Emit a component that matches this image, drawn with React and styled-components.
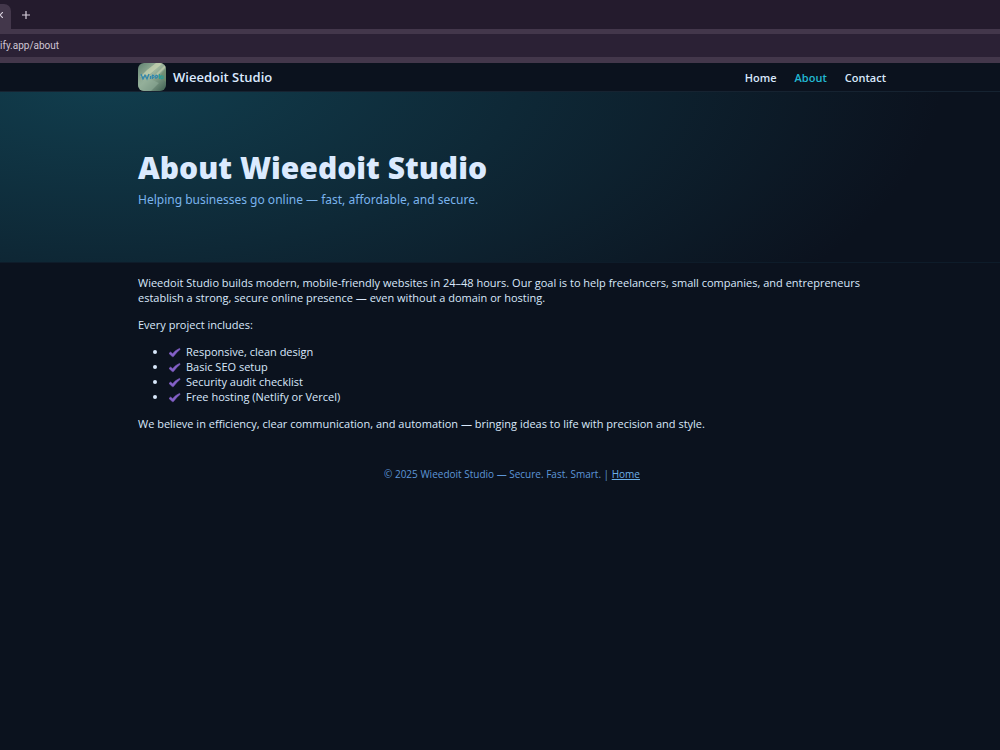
import React from "react"
import styled, { createGlobalStyle, ThemeProvider } from "styled-components"

const theme = {
    font: '"Open Sans", "Noto Sans", sans-serif',
    display: '"Noto Sans", "Open Sans", sans-serif',
    background: "#0b121e",
    text: "#d9e8fb",
    heading: "#dbeafe",
    soft: "#7ab4ee",
    accent: "#22b8d3",
    line: "#162331",
    check: "#8561c9",
}

const GlobalStyle = createGlobalStyle`
    * {
        box-sizing: border-box;
    }

    body {
        margin: 0;
        overflow-x: hidden;
        background-color: ${theme.background};
        color: ${theme.text};
        font-family: ${theme.font};
        font-size: 11px;
        line-height: 15px;
    }
`

/* the window runs a little past the right edge of the screen */
const Window = styled.div`
    width: calc(100% + 24px);
`

const TabStrip = styled.div`
    display: flex;
    align-items: flex-end;
    height: 29px;
    background-color: #241b2d;
`

const Tab = styled.div`
    display: flex;
    align-items: flex-start;
    width: 11px;
    height: 25px;
    background-color: #43374b;
    border-top-right-radius: 7px;
`

const IconButton = styled.button`
    display: flex;
    align-items: center;
    justify-content: ${({ $align }) => $align || "center"};
    width: ${({ $width }) => $width};
    height: ${({ $height }) => $height};
    padding: 0;
    border: none;
    background: none;
    color: #d8d0dd;

    svg {
        flex: none;
    }
`

const Toolbar = styled.div`
    display: flex;
    align-items: center;
    height: 34px;
    border-top: 5px solid #43374b;
    border-bottom: 6px solid #43374b;
    background-color: #2b2135;
`

const AddressInput = styled.input`
    width: 100%;
    height: 23px;
    padding: 0;
    border: none;
    outline: none;
    background: none;
    color: #cfc6d4;
    font-family: Roboto, sans-serif;
    font-size: 10px;
`

const Container = styled.div`
    width: 748px;
    max-width: 100%;
    margin: 0 auto;
`

const Header = styled.header`
    border-bottom: 1px solid ${({ theme }) => theme.line};
`

const HeaderRow = styled(Container)`
    display: flex;
    align-items: center;
    justify-content: space-between;
    height: 28px;
`

const Brand = styled.a`
    display: flex;
    align-items: center;
    gap: 7px;
    color: ${({ theme }) => theme.heading};
    font-size: 13px;
    font-weight: 600;
    text-decoration: none;
`

const Nav = styled.nav`
    display: flex;
    gap: 18px;
`

const NavLink = styled.a`
    color: ${({ $active, theme }) => ($active ? theme.accent : theme.text)};
    font-size: 11px;
    font-weight: 600;
    text-decoration: none;
`

const Hero = styled.section`
    padding: 56px 0 53px;
    border-bottom: 1px solid #0e1c2a;
    background: radial-gradient(840px 360px at 10% -10%, #113e4e, transparent);
`

const Title = styled.h1`
    margin: 0;
    color: ${({ theme }) => theme.heading};
    font-size: 30px;
    font-weight: 800;
    line-height: 40px;
`

const Subtitle = styled.p`
    margin: 2px 0 0;
    color: ${({ theme }) => theme.soft};
    font-family: ${({ theme }) => theme.display};
    font-size: 12px;
    line-height: 19px;
`

const Content = styled(Container)`
    padding: 12px 0 0;

    p {
        margin: 0 0 12px;
    }
`

const FeatureList = styled.ul`
    margin: 0 0 12px;
    padding-left: 30px;
`

const Feature = styled.li`
    svg {
        margin-right: 5px;
        vertical-align: middle;
    }

    &::marker {
        font-size: 12px;
    }
`

const Footer = styled.footer`
    padding: 24px 0;
    color: #5d96d8;
    font-size: 10px;
    text-align: center;

    a {
        color: #6eb0e6;
    }
`

const features = [
    "Responsive, clean design",
    "Basic SEO setup",
    "Security audit checklist",
    "Free hosting (Netlify or Vercel)",
]

const Logo = () => (
    <svg width="28" height="28" viewBox="0 0 28 28" aria-hidden="true">
        <defs>
            <linearGradient id="sky" x1="0" y1="0" x2="1" y2="1">
                <stop offset="0" stopColor="#5f8070" />
                <stop offset="0.45" stopColor="#9db59d" />
                <stop offset="1" stopColor="#3c5e50" />
            </linearGradient>
            <clipPath id="round">
                <rect width="28" height="28" rx="6" />
            </clipPath>
        </defs>
        <g clipPath="url(#round)">
            <rect width="28" height="28" fill="url(#sky)" />
            <path d="M18 0h7L12 11 2 14l7-7z" fill="#d3dcb9" opacity="0.6" />
            <path d="M28 1v3L18 14h-3z" fill="#d3dcb9" opacity="0.5" />
            <path d="M28 5v14l-7-5z" fill="#6d8a6c" opacity="0.7" />
            <path d="M0 19l12-3 9 4-8 8H0z" fill="#8dac98" opacity="0.6" />
            <path
                d="M3 11l2 5 2-4 2 4 2-5M12.500 13v3M14.500 15q3-1 1-2.500t-1 3.500M18 15q3-1 1-2.500t-1 3.500"
                fill="none"
                stroke="#2f86ae"
                strokeWidth="1.200"
            />
            <path
                d="M21.500 11v5M22 14l2-1.500M22 14l2 2M25 12.500v3.500"
                fill="none"
                stroke="#2a9c96"
                strokeWidth="1.200"
            />
        </g>
    </svg>
)

const Check = () => (
    <svg width="13" height="12" viewBox="0 0 13 12" aria-hidden="true">
        <path
            d="M1 6.400l1.600-1.300 2 1.600Q8 2.800 11.500 1.400l.7.9Q8.600 5 5.400 9.600H4.300z"
            fill={theme.check}
            stroke={theme.check}
            strokeWidth="0.6"
            strokeLinejoin="round"
        />
    </svg>
)

const Browser = () => (
    <>
        <TabStrip>
            <Tab>
                <IconButton $width="11px" $height="22px" $align="flex-start" aria-label="Close tab">
                    <svg width="3" height="6" viewBox="3 0 3 6">
                        <path d="M0 0l6 6M6 0L0 6" stroke="currentColor" strokeWidth="1.2" />
                    </svg>
                </IconButton>
            </Tab>
            <IconButton $width="29px" $height="29px" aria-label="New tab">
                <svg width="8" height="8" viewBox="0 0 8 8">
                    <path d="M4 0v8M0 4h8" stroke="currentColor" strokeWidth="1.2" />
                </svg>
            </IconButton>
        </TabStrip>
        <Toolbar>
            <AddressInput aria-label="Address" defaultValue="ify.app/about" />
        </Toolbar>
    </>
)

const App = () => (
    <ThemeProvider theme={theme}>
        <GlobalStyle />
        <Window>
            <Browser />
            <Header>
                <HeaderRow>
                    <Brand href="#home">
                        <Logo />
                        Wieedoit Studio
                    </Brand>
                    <Nav>
                        <NavLink href="#home">Home</NavLink>
                        <NavLink href="#about" $active>
                            About
                        </NavLink>
                        <NavLink href="#contact">Contact</NavLink>
                    </Nav>
                </HeaderRow>
            </Header>
            <Hero>
                <Container>
                    <Title>About Wieedoit Studio</Title>
                    <Subtitle>Helping businesses go online — fast, affordable, and secure.</Subtitle>
                </Container>
            </Hero>
            <Content as="main">
                <p>
                    Wieedoit Studio builds modern, mobile-friendly websites in 24–48 hours. Our goal is to help
                    freelancers, small companies, and entrepreneurs establish a strong, secure online presence — even
                    without a domain or hosting.
                </p>
                <p>Every project includes:</p>
                <FeatureList>
                    {features.map((feature) => (
                        <Feature key={feature}>
                            <Check />
                            {feature}
                        </Feature>
                    ))}
                </FeatureList>
                <p>
                    We believe in efficiency, clear communication, and automation — bringing ideas to life with
                    precision and style.
                </p>
            </Content>
            <Footer>
                © 2025 Wieedoit Studio — Secure. Fast. Smart. | <a href="#home">Home</a>
            </Footer>
        </Window>
    </ThemeProvider>
)

export default App
